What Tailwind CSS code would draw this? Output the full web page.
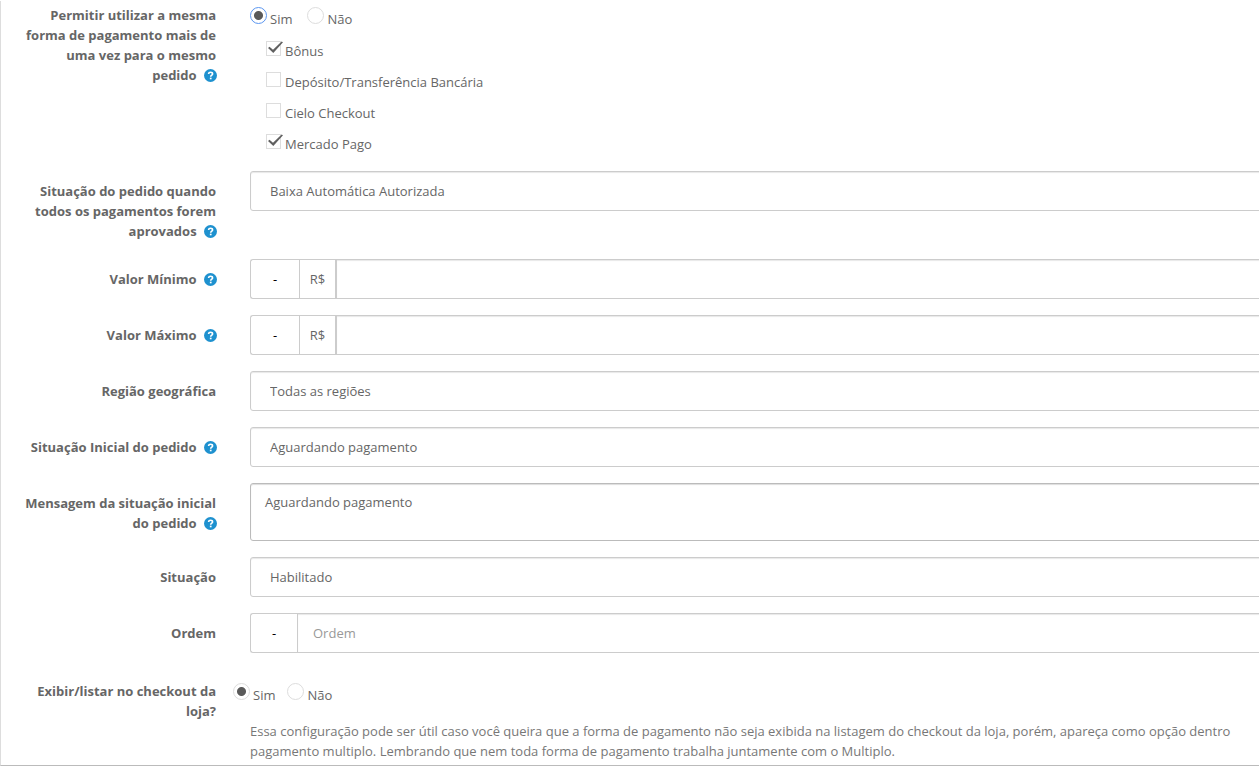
<!DOCTYPE html>
<html lang="pt-BR">
<head>
    <meta charset="UTF-8">
    <meta name="viewport" content="width=device-width, initial-scale=1.0">
    <title>Formas de pagamento</title>
    <script src="https://cdn.jsdelivr.net/npm/@tailwindcss/browser@4"></script>
</head>
<body class="bg-white overflow-x-hidden font-['Open_Sans',sans-serif] text-[13px] leading-5 text-[#666]">

    <!-- Help icon shared by the labels -->
    <svg class="hidden">
        <symbol id="help" viewBox="0 0 12 12">
            <circle cx="6" cy="6" r="6" fill="#1e91cf"/>
            <path d="M4.200 4.600C4.300 3.500 5 3 6 3c1.100 0 1.900.600 1.900 1.500C7.900 5.700 6.200 5.600 6.200 7.100" fill="none" stroke="#fff" stroke-width="1.500"/>
            <rect x="5.400" y="8" width="1.600" height="1.500" fill="#fff"/>
        </symbol>
    </svg>

    <form class="mt-px flex flex-col gap-4 border-l border-b border-l-[#ddd] border-b-[#bbb] pb-1">

        <!-- Multiple use of the same payment method -->
        <div class="flex">
            <div id="multiLabel" class="w-[215px] shrink-0 pl-4 pt-1 text-right font-bold">Permitir utilizar a mesma forma de pagamento mais de uma vez para o mesmo <span class="whitespace-nowrap">pedido <svg class="ml-1 -mr-px mb-0.5 inline size-[13px]"><use href="#help"/></svg></span></div>
            <div class="flex-1 pl-[34px] pt-1.5 pb-px" role="group" aria-labelledby="multiLabel">
                <div class="flex gap-[15px]">
                    <label class="flex gap-[3px]">
                        <input type="radio" name="multi" checked class="size-[17px] appearance-none rounded-full border border-[#ddd] checked:border-[#5b96f0] checked:bg-[radial-gradient(circle,#5a5a5a_4px,transparent_5px)]">
                        <span class="pt-0.5">Sim</span>
                    </label>
                    <label class="flex gap-[3px]">
                        <input type="radio" name="multi" class="size-[17px] appearance-none rounded-full border border-[#ddd] checked:bg-[radial-gradient(circle,#5a5a5a_4px,transparent_5px)]">
                        <span class="pt-0.5">Não</span>
                    </label>
                </div>
                <div class="flex flex-col items-start gap-[11px] pl-4 pt-3">
                    <label class="relative flex gap-[4px]">
                        <input type="checkbox" checked class="peer size-[15px] appearance-none border border-[#ddd]">
                        <svg class="absolute left-0 top-0 hidden h-4 w-[18px] peer-checked:block" viewBox="0 0 18 16"><path d="M2 7l1.500-1.200L7 8.700 15.600 0.500 17 1.200 7.300 12z" fill="#606060"/></svg>
                        <span>Bônus</span>
                    </label>
                    <label class="relative flex gap-[4px]">
                        <input type="checkbox" class="peer size-[15px] appearance-none border border-[#ddd]">
                        <svg class="absolute left-0 top-0 hidden h-4 w-[18px] peer-checked:block" viewBox="0 0 18 16"><path d="M2 7l1.500-1.200L7 8.700 15.600 0.500 17 1.200 7.300 12z" fill="#606060"/></svg>
                        <span>Depósito/Transferência Bancária</span>
                    </label>
                    <label class="relative flex gap-[4px]">
                        <input type="checkbox" class="peer size-[15px] appearance-none border border-[#ddd]">
                        <svg class="absolute left-0 top-0 hidden h-4 w-[18px] peer-checked:block" viewBox="0 0 18 16"><path d="M2 7l1.500-1.200L7 8.700 15.600 0.500 17 1.200 7.300 12z" fill="#606060"/></svg>
                        <span>Cielo Checkout</span>
                    </label>
                    <label class="relative flex gap-[4px]">
                        <input type="checkbox" checked class="peer size-[15px] appearance-none border border-[#ddd]">
                        <svg class="absolute left-0 top-0 hidden h-4 w-[18px] peer-checked:block" viewBox="0 0 18 16"><path d="M2 7l1.500-1.200L7 8.700 15.600 0.500 17 1.200 7.300 12z" fill="#606060"/></svg>
                        <span>Mercado Pago</span>
                    </label>
                </div>
            </div>
        </div>

        <!-- Status once everything is approved -->
        <div class="flex">
            <label for="approved" class="w-[215px] shrink-0 pl-4 pt-2.5 pb-0.5 text-right font-bold">Situação do pedido quando todos os pagamentos forem aprovados <svg class="ml-1 -mr-px mb-0.5 inline size-[13px]"><use href="#help"/></svg></label>
            <div class="-mr-4 flex-1 pl-[34px]">
                <select id="approved" class="h-10 w-full appearance-none rounded-[3px] border border-[#ccc] px-[19px] inset-shadow-[0_1px_1px_#e8e8e8]">
                    <option>Baixa Automática Autorizada</option>
                </select>
            </div>
        </div>

        <!-- Minimum and maximum -->
        <div class="flex">
            <label for="min" class="w-[215px] shrink-0 pt-2.5 text-right font-bold">Valor Mínimo <svg class="ml-1 -mr-px mb-0.5 inline size-[13px]"><use href="#help"/></svg></label>
            <div class="-mr-4 flex h-10 flex-1 pl-[34px]">
                <button type="button" class="w-[49px] rounded-l-[3px] border border-r-0 border-[#ccc] text-black">-</button>
                <span class="w-9 border border-r-0 border-[#ccc] pt-[9px] text-center">R$</span>
                <input id="min" type="text" class="min-w-0 flex-1 border border-l-2 border-[#ccc] px-[15px] inset-shadow-[0_1px_1px_#e8e8e8]">
            </div>
        </div>
        <div class="flex">
            <label for="max" class="w-[215px] shrink-0 pt-2.5 text-right font-bold">Valor Máximo <svg class="ml-1 -mr-px mb-0.5 inline size-[13px]"><use href="#help"/></svg></label>
            <div class="-mr-4 flex h-10 flex-1 pl-[34px]">
                <button type="button" class="w-[49px] rounded-l-[3px] border border-r-0 border-[#ccc] text-black">-</button>
                <span class="w-9 border border-r-0 border-[#ccc] pt-[9px] text-center">R$</span>
                <input id="max" type="text" class="min-w-0 flex-1 border border-l-2 border-[#ccc] px-[15px] inset-shadow-[0_1px_1px_#e8e8e8]">
            </div>
        </div>

        <div class="flex">
            <label for="region" class="w-[215px] shrink-0 pt-2.5 text-right font-bold">Região geográfica</label>
            <div class="-mr-4 flex-1 pl-[34px]">
                <select id="region" class="h-10 w-full appearance-none rounded-[3px] border border-[#ccc] px-[19px] inset-shadow-[0_1px_1px_#e8e8e8]">
                    <option>Todas as regiões</option>
                </select>
            </div>
        </div>

        <div class="flex">
            <label for="initial" class="w-[215px] shrink-0 pt-2.5 text-right font-bold">Situação Inicial do pedido <svg class="ml-1 -mr-px mb-0.5 inline size-[13px]"><use href="#help"/></svg></label>
            <div class="-mr-4 flex-1 pl-[34px]">
                <select id="initial" class="h-10 w-full appearance-none rounded-[3px] border border-[#ccc] px-[19px] inset-shadow-[0_1px_1px_#e8e8e8]">
                    <option>Aguardando pagamento</option>
                </select>
            </div>
        </div>

        <div class="flex">
            <label for="message" class="w-[215px] shrink-0 pl-4 pt-2.5 text-right font-bold">Mensagem da situação inicial do pedido <svg class="ml-1 -mr-px mb-0.5 inline size-[13px]"><use href="#help"/></svg></label>
            <div class="-mr-4 flex-1 pl-[34px]">
                <textarea id="message" class="block h-[58px] w-full resize-none rounded-[3px] border border-[#bbb] px-3.5 py-2 inset-shadow-[0_1px_1px_#ddd]">Aguardando pagamento</textarea>
            </div>
        </div>

        <div class="flex">
            <label for="status" class="w-[215px] shrink-0 pt-2.5 text-right font-bold">Situação</label>
            <div class="-mr-4 flex-1 pl-[34px]">
                <select id="status" class="h-10 w-full appearance-none rounded-[3px] border border-[#ccc] px-[19px] inset-shadow-[0_1px_1px_#e8e8e8]">
                    <option>Habilitado</option>
                </select>
            </div>
        </div>

        <div class="flex">
            <label for="order" class="w-[215px] shrink-0 pt-2.5 text-right font-bold">Ordem</label>
            <div class="-mr-4 flex h-10 flex-1 pl-[34px]">
                <button type="button" class="w-[47px] rounded-l-[3px] border border-r-0 border-[#ccc] text-black">-</button>
                <input id="order" type="text" placeholder="Ordem" class="min-w-0 flex-1 border border-[#ccc] px-[15px] placeholder:text-[#999] inset-shadow-[0_1px_1px_#e8e8e8]">
            </div>
        </div>

        <!-- Show in the store checkout -->
        <div class="flex">
            <div id="showLabel" class="w-[215px] shrink-0 pl-4 pt-3 text-right font-bold">Exibir/listar no checkout da loja?</div>
            <div class="min-w-0 flex-1 pl-[34px] pt-3.5">
                <div class="-ml-[17px] flex gap-3" role="group" aria-labelledby="showLabel">
                    <label class="flex gap-[3px]">
                        <input type="radio" name="show" checked class="size-[17px] appearance-none rounded-full border border-[#ddd] checked:bg-[radial-gradient(circle,#5a5a5a_4px,transparent_5px)]">
                        <span class="pt-0.5">Sim</span>
                    </label>
                    <label class="flex gap-[3px]">
                        <input type="radio" name="show" class="size-[17px] appearance-none rounded-full border border-[#ddd] checked:bg-[radial-gradient(circle,#5a5a5a_4px,transparent_5px)]">
                        <span class="pt-0.5">Não</span>
                    </label>
                </div>
                <p class="mt-4 whitespace-nowrap text-[#777]">Essa configuração pode ser útil caso você queira que a forma de pagamento não seja exibida na listagem do checkout da loja, porém, apareça como opção dentro<br>pagamento multiplo. Lembrando que nem toda forma de pagamento trabalha juntamente com o Multiplo.</p>
            </div>
        </div>
    </form>

</body>
</html>
